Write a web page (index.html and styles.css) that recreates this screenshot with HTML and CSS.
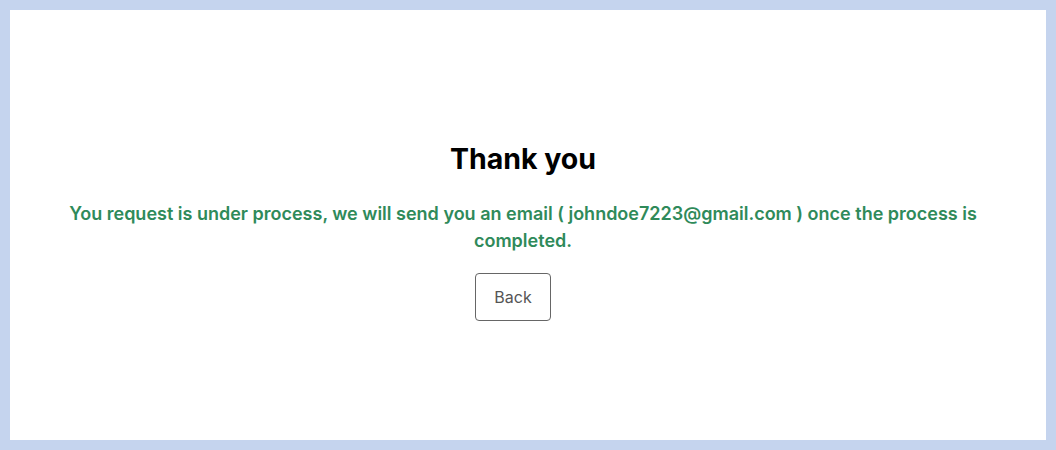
FILE: index.html
```html
<!DOCTYPE html>
<html lang="en">
<head>
  <meta charset="UTF-8">
  <meta name="viewport" content="width=device-width, initial-scale=1.0">
  <title>Thank you</title>
  <link rel="stylesheet" href="styles.css">
</head>
<body>
  <div class="frame">
    <main class="panel">
      <div class="message">
        <h1>Thank you</h1>
        <p class="status">You request is under process, we will send you an email ( johndoe7223@gmail.com ) once the process is completed.</p>
        <div class="actions">
          <button type="button" class="btn-back">Back</button>
        </div>
      </div>
    </main>
  </div>
</body>
</html>
```

FILE: styles.css
```css
:root {
  --frame-color: #c5d4ee;
  --panel-color: #ffffff;
  --heading-color: #000000;
  --success-color: #2f8a5a;
  --button-color: #555555;
}

* {
  box-sizing: border-box;
  margin: 0;
  padding: 0;
}

html, body {
  height: 100%;
}

body {
  font-family: Inter, "Noto Sans", sans-serif;
  background-color: var(--frame-color);
}

.frame {
  height: 100%;
  padding: 10px;
}

.panel {
  height: 100%;
  background-color: var(--panel-color);
  display: flex;
  align-items: center;
  justify-content: center;
  padding: 13px 20px 0 10px;
}

.message {
  text-align: center;
  max-width: 940px;
}

h1 {
  color: var(--heading-color);
  font-size: 28.5px;
  font-weight: 700;
  line-height: 34px;
  margin-bottom: 24px;
}

.status {
  color: var(--success-color);
  font-size: 18px;
  font-weight: 600;
  line-height: 27px;
  margin-bottom: 19px;
}

.actions {
  padding-right: 20px;
}

.btn-back {
  font-family: inherit;
  font-size: 16px;
  color: var(--button-color);
  background: #ffffff;
  border: 1px solid #666666;
  border-radius: 4px;
  width: 76px;
  height: 48px;
  cursor: pointer;
}
```
